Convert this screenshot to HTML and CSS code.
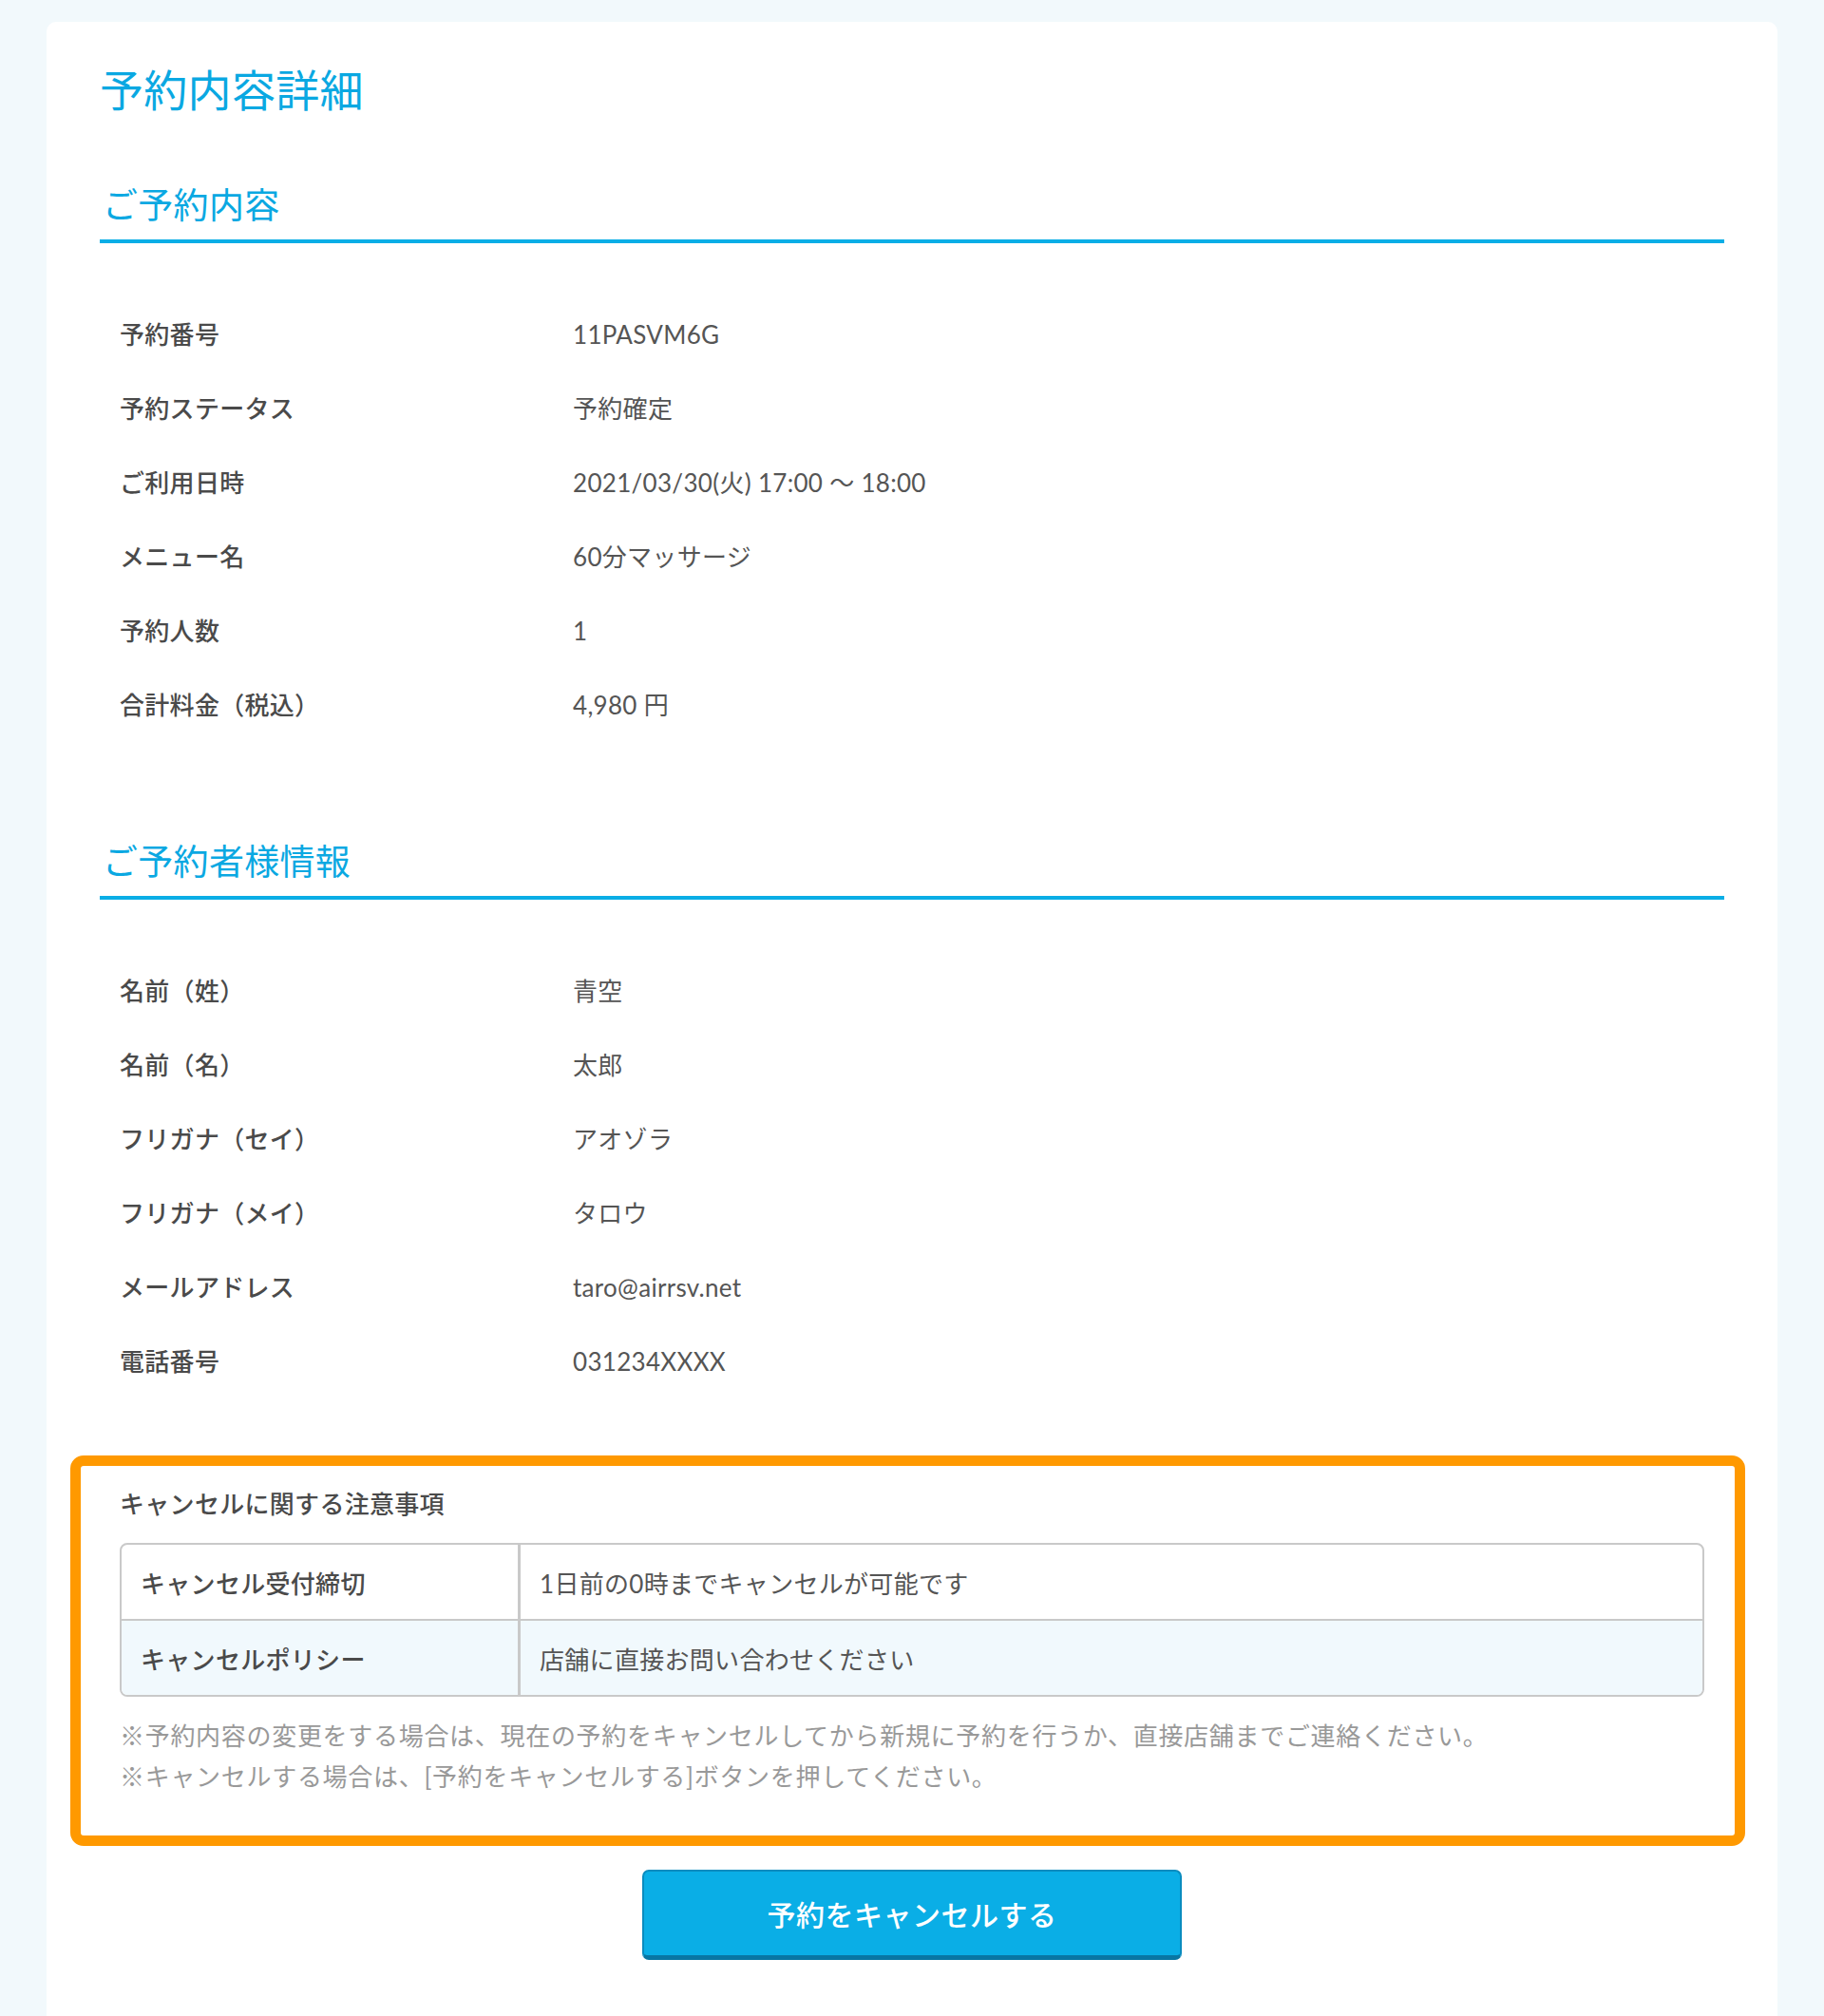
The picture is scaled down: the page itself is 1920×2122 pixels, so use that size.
FILE: index.html
```html
<!DOCTYPE html>
<html lang="ja">
<head>
    <meta charset="UTF-8">
    <meta name="viewport" content="width=device-width, initial-scale=1.0">
    <title>予約内容詳細</title>
    <link rel="stylesheet" href="styles.css">
</head>
<body>
    <div class="card">
        <h1 class="page-title">予約内容詳細</h1>

        <h2 class="section-title">ご予約内容</h2>
        <dl class="detail-list">
            <dt>予約番号</dt><dd>11PASVM6G</dd>
            <dt>予約ステータス</dt><dd>予約確定</dd>
            <dt>ご利用日時</dt><dd>2021/03/30(火) 17:00 〜 18:00</dd>
            <dt>メニュー名</dt><dd>60分マッサージ</dd>
            <dt>予約人数</dt><dd>1</dd>
            <dt>合計料金（税込）</dt><dd>4,980 円</dd>
        </dl>

        <h2 class="section-title second">ご予約者様情報</h2>
        <dl class="detail-list">
            <dt>名前（姓）</dt><dd>青空</dd>
            <dt>名前（名）</dt><dd>太郎</dd>
            <dt>フリガナ（セイ）</dt><dd>アオゾラ</dd>
            <dt>フリガナ（メイ）</dt><dd>タロウ</dd>
            <dt>メールアドレス</dt><dd>taro@airrsv.net</dd>
            <dt>電話番号</dt><dd>031234XXXX</dd>
        </dl>

        <div class="cancel-notice">
            <h3 class="notice-title">キャンセルに関する注意事項</h3>
            <table class="notice-table">
                <tr>
                    <th>キャンセル受付締切</th>
                    <td>1日前の0時までキャンセルが可能です</td>
                </tr>
                <tr class="alt">
                    <th>キャンセルポリシー</th>
                    <td>店舗に直接お問い合わせください</td>
                </tr>
            </table>
            <p class="notice-text">※予約内容の変更をする場合は、現在の予約をキャンセルしてから新規に予約を行うか、直接店舗までご連絡ください。</p>
            <p class="notice-text">※キャンセルする場合は、[予約をキャンセルする]ボタンを押してください。</p>
        </div>

        <div class="button-area">
            <button class="cancel-button">予約をキャンセルする</button>
        </div>
    </div>
</body>
</html>
```

FILE: styles.css
```css
body {
    margin: 0;
    padding: 23px 49px 0;
    background: #f2f9fc;
    font-family: Lato, "Noto Sans CJK JP", sans-serif;
    color: #444;
    letter-spacing: 0.3px;
}

.card {
    background: #fff;
    border-radius: 10px 10px 0 0;
    padding: 39px 56px 60px;
}

.page-title {
    margin: 0;
    font-size: 46px;
    line-height: 66px;
    font-weight: 400;
    color: #0aa8e2;
}

.section-title {
    margin: 61px 0 0;
    padding: 0 0 9px 3px;
    font-size: 37px;
    line-height: 54px;
    font-weight: 400;
    color: #0aa8e2;
    border-bottom: 4px solid #0aaee6;
}

.section-title.second {
    margin-top: 99px;
}

.detail-list {
    display: grid;
    grid-template-columns: 477px 1fr;
    margin: 57px 0 0;
    padding-left: 21px;
    font-size: 26px;
}

.detail-list dt,
.detail-list dd {
    margin: 0;
    height: 78px;
    line-height: 78px;
}

.detail-list dt {
    font-weight: 500;
    color: #4a4a4a;
}

.detail-list dd {
    color: #555;
}

/* キャンセル注意事項 */
.cancel-notice {
    margin: 60px -22px 0 -31px;
    padding: 21px 32px 40px 41px;
    border: 11px solid #ff9900;
    border-radius: 14px;
}

.notice-title {
    margin: 0 0 21px;
    font-size: 26px;
    line-height: 39px;
    font-weight: 500;
    color: #4a4a4a;
}

.notice-table {
    width: 100%;
    border-spacing: 0;
    border: 2px solid #c9c9c9;
    border-radius: 8px;
    font-size: 26px;
    margin-bottom: 20px;
}

.notice-table th,
.notice-table td {
    height: 78px;
    padding: 0 20px;
    text-align: left;
}

.notice-table th {
    width: 377px;
    font-weight: 500;
    color: #4a4a4a;
    border-right: 3px solid #c9c9c9;
}

.notice-table td {
    color: #555;
}

.notice-table tr:first-child th,
.notice-table tr:first-child td {
    border-bottom: 2px solid #c9c9c9;
}

.notice-table tr.alt th,
.notice-table tr.alt td {
    background: #f1f9fd;
}

.notice-table tr.alt th {
    border-bottom-left-radius: 6px;
}

.notice-table tr.alt td {
    border-bottom-right-radius: 6px;
}

.notice-text {
    margin: 0;
    font-size: 26px;
    line-height: 43px;
    color: #999;
    letter-spacing: 0.7px;
}

.button-area {
    text-align: center;
    margin-top: 25px;
}

.cancel-button {
    width: 568px;
    height: 95px;
    background: #0aaee6;
    color: #fff;
    font-family: Lato, "Noto Sans CJK JP", sans-serif;
    font-size: 30px;
    font-weight: 500;
    letter-spacing: 0.5px;
    border: 2px solid #0a8cbf;
    border-bottom: 5px solid #0876a3;
    border-radius: 7px;
    cursor: pointer;
}
```
